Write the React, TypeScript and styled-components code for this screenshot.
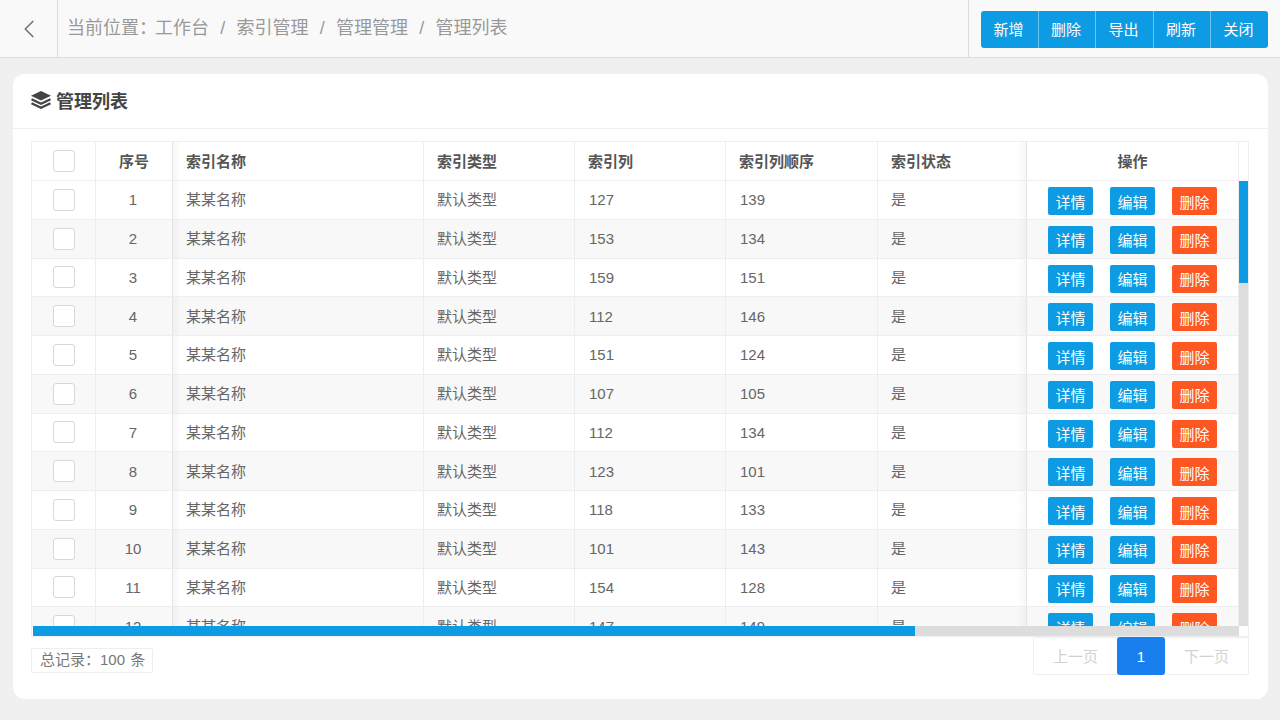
import { ChevronLeft } from "lucide-react";
import styled, { createGlobalStyle } from "styled-components";

const COLUMNS = "64px 77px 251px 151px 151px 152px 149px 212px";
const COLON = "\uFF1A";

const ROWS = [
  [1, 127, 139],
  [2, 153, 134],
  [3, 159, 151],
  [4, 112, 146],
  [5, 151, 124],
  [6, 107, 105],
  [7, 112, 134],
  [8, 123, 101],
  [9, 118, 133],
  [10, 101, 143],
  [11, 154, 128],
  [12, 147, 149],
];

const ACTIONS = ["新增", "删除", "导出", "刷新", "关闭"];
const CRUMBS = ["索引管理", "管理管理", "管理列表"];

const GlobalStyle = createGlobalStyle`
  html, body {
    margin: 0;
    height: 100%;
    background: #f0f0f0;
  }
  body {
    font-family: "Liberation Sans", "Noto Sans CJK SC", sans-serif;
    color: #666;
    overflow: hidden;
  }
  * {
    box-sizing: border-box;
  }
`;

const Page = styled.div`
  width: 1280px;
  height: 720px;
  display: flex;
  flex-direction: column;
`;

const TopBar = styled.header`
  height: 58px;
  display: flex;
  align-items: stretch;
  background: #f9f9f9;
  border-bottom: 1px solid #ddd;
`;

const BackButton = styled.div`
  width: 58px;
  display: flex;
  align-items: center;
  justify-content: center;
  border-right: 1px solid #ddd;
  color: #777;
`;

const Breadcrumb = styled.nav`
  flex: 1;
  display: flex;
  align-items: center;
  padding: 0 0 5px 9px;
  font-size: 18px;
  color: #999;
`;

const LocationLabel = styled.span`
  margin-right: -2px;
`;

const Slash = styled.span`
  margin: 0 11.25px;
`;

const Toolbar = styled.div`
  width: 312px;
  margin-left: auto;
  padding: 11px 12px 0 12px;
  border-left: 1px solid #ddd;
`;

const ActionGroup = styled.div`
  display: grid;
  grid-template-columns: 57px 57px 58px 57px 58px;
  height: 37px;
  border-radius: 3px;
  overflow: hidden;
  background: #0d9be4;
`;

const ActionButton = styled.div`
  display: flex;
  align-items: center;
  justify-content: center;
  padding: 0 2px 2px 0;
  font-size: 15px;
  color: #fff;
  & + & {
    border-left: 1px solid #6cc3ef;
  }
`;

const Card = styled.main`
  width: 1255px;
  height: 625px;
  margin: 16px 0 0 13px;
  background: #fff;
  border-radius: 12px;
`;

const CardHeader = styled.div`
  height: 55px;
  display: flex;
  align-items: center;
  gap: 5px;
  padding: 0 0 2px 18px;
  border-bottom: 1px solid #eee;
  font-size: 18px;
  font-weight: bold;
  color: #444;
`;

const StackIcon = styled.svg`
  width: 20px;
  height: 18px;
  color: #444;
`;

const CardBody = styled.div`
  padding: 12px 19px 0 18px;
`;

const TableFrame = styled.div`
  height: 496px;
  display: grid;
  grid-template-columns: 1207px 9px;
  grid-template-rows: 39px 445px 10px;
  border: 1px solid #eee;
`;

const HeaderRow = styled.div`
  display: grid;
  grid-template-columns: ${COLUMNS};
  border-bottom: 1px solid #eee;
  font-weight: bold;
  color: #555;
`;

const HeaderGap = styled.div``;

const Body = styled.div`
  overflow: hidden;
`;

const Row = styled.div<{ $striped: boolean }>`
  display: grid;
  grid-template-columns: ${COLUMNS};
  height: 38.75px;
  background: ${(p) => (p.$striped ? "#f8f8f8" : "#fff")};
  border-bottom: 1px solid #eee;
`;

const Cell = styled.div<{ $center?: boolean; $pinned?: "left" | "right" }>`
  display: flex;
  align-items: center;
  justify-content: ${(p) => (p.$center ? "center" : "flex-start")};
  padding-left: ${(p) => (p.$center ? 0 : "13px")};
  font-size: 15px;
  border-right: 1px solid #eee;
  position: relative;
  ${(p) =>
    p.$pinned === "left" &&
    `&::after {
      content: "";
      position: absolute;
      top: 0;
      bottom: 0;
      left: 100%;
      width: 9px;
      z-index: 1;
      background: linear-gradient(to right, rgba(0, 0, 0, 0.04), transparent);
    }`}
  ${(p) =>
    p.$pinned === "right" &&
    `&::before {
      content: "";
      position: absolute;
      top: 0;
      bottom: 0;
      right: 100%;
      width: 9px;
      z-index: 1;
      background: linear-gradient(to left, rgba(0, 0, 0, 0.04), transparent);
    }`}
`;

// the CJK fallback font sits a little low, so its cells get lifted
const TextCell = styled(Cell)`
  padding-bottom: 2px;
`;

const NumberCell = styled(Cell)`
  padding-left: 14px;
`;

const IndexCell = styled(Cell)`
  padding-right: 2px;
`;

const Checkbox = styled.span`
  display: block;
  width: 22px;
  height: 22px;
  background: #fff;
  border: 1px solid #d8d8d8;
  border-radius: 3px;
`;

const OpsCell = styled(Cell)`
  gap: 17px;
  padding-top: 2.5px;
`;

const OpButton = styled.span<{ $danger?: boolean }>`
  width: 45px;
  height: 28px;
  display: flex;
  align-items: center;
  justify-content: center;
  border-radius: 2px;
  color: #fff;
  font-size: 15px;
  background: ${(p) => (p.$danger ? "#ff5722" : "#0d9be4")};
`;

const VerticalTrack = styled.div`
  background: #ddd;
`;

const VerticalThumb = styled.div`
  height: 102px;
  background: #0d9be4;
`;

const HorizontalTrack = styled.div`
  margin-left: 1px;
  background: #ddd;
`;

const HorizontalThumb = styled.div`
  width: 882px;
  height: 100%;
  background: #0d9be4;
`;

const Footer = styled.div`
  display: flex;
  justify-content: space-between;
  align-items: flex-start;
`;

const Total = styled.div`
  height: 25px;
  margin-top: 11px;
  padding: 0 7px 4px 8px;
  display: flex;
  align-items: center;
  border: 1px solid #eee;
  border-radius: 2px;
  font-size: 15px;
  color: #777;
  word-spacing: 1px;
`;

const Pager = styled.div`
  width: 216px;
  height: 38px;
  display: grid;
  grid-template-columns: 83px 48px 83px;
  border: 1px solid #eee;
  border-radius: 2px;
`;

const PagerItem = styled.div<{ $active?: boolean }>`
  display: flex;
  align-items: center;
  justify-content: center;
  font-size: 15px;
  margin: ${(p) => (p.$active ? "-1px 0" : 0)};
  padding-bottom: ${(p) => (p.$active ? 0 : "2px")};
  border-radius: ${(p) => (p.$active ? "3px" : 0)};
  color: ${(p) => (p.$active ? "#fff" : "#d2d2d2")};
  background: ${(p) => (p.$active ? "#1a7fee" : "transparent")};
`;

export default function App() {
  return (
    <Page>
      <GlobalStyle />
      <TopBar>
        <BackButton>
          <ChevronLeft size={30} strokeWidth={1.4} />
        </BackButton>
        <Breadcrumb>
          <LocationLabel>当前位置{COLON}</LocationLabel>
          工作台
          {CRUMBS.map((crumb) => (
            <span key={crumb}>
              <Slash>/</Slash>
              {crumb}
            </span>
          ))}
        </Breadcrumb>
        <Toolbar>
          <ActionGroup>
            {ACTIONS.map((action) => (
              <ActionButton key={action}>{action}</ActionButton>
            ))}
          </ActionGroup>
        </Toolbar>
      </TopBar>
      <Card>
        <CardHeader>
          <StackIcon viewBox="0 0 20 18">
            <path d="M10 0 L20 4.8 L10 9.6 L0 4.8 Z" fill="currentColor" />
            <path
              d="M0.5 8.2 L10 12.8 L19.5 8.2 M0.5 12.2 L10 16.8 L19.5 12.2"
              fill="none"
              stroke="currentColor"
              strokeWidth="2.2"
            />
          </StackIcon>
          管理列表
        </CardHeader>
        <CardBody>
          <TableFrame>
            <HeaderRow>
              <Cell $center>
                <Checkbox />
              </Cell>
              <TextCell $center $pinned="left">
                序号
              </TextCell>
              <TextCell>索引名称</TextCell>
              <TextCell>索引类型</TextCell>
              <TextCell>索引列</TextCell>
              <TextCell>索引列顺序</TextCell>
              <TextCell>索引状态</TextCell>
              <TextCell $center $pinned="right">
                操作
              </TextCell>
            </HeaderRow>
            <HeaderGap />
            <Body>
              {ROWS.map(([no, column, order], i) => (
                <Row key={no} $striped={i % 2 === 1}>
                  <Cell $center>
                    <Checkbox />
                  </Cell>
                  <IndexCell $center $pinned="left">
                    {no}
                  </IndexCell>
                  <TextCell>某某名称</TextCell>
                  <TextCell>默认类型</TextCell>
                  <NumberCell>{column}</NumberCell>
                  <NumberCell>{order}</NumberCell>
                  <TextCell>是</TextCell>
                  <OpsCell $center $pinned="right">
                    <OpButton>详情</OpButton>
                    <OpButton>编辑</OpButton>
                    <OpButton $danger>删除</OpButton>
                  </OpsCell>
                </Row>
              ))}
            </Body>
            <VerticalTrack>
              <VerticalThumb />
            </VerticalTrack>
            <HorizontalTrack>
              <HorizontalThumb />
            </HorizontalTrack>
          </TableFrame>
          <Footer>
            <Total>总记录{COLON}100 条</Total>
            <Pager>
              <PagerItem>上一页</PagerItem>
              <PagerItem $active>1</PagerItem>
              <PagerItem>下一页</PagerItem>
            </Pager>
          </Footer>
        </CardBody>
      </Card>
    </Page>
  );
}
